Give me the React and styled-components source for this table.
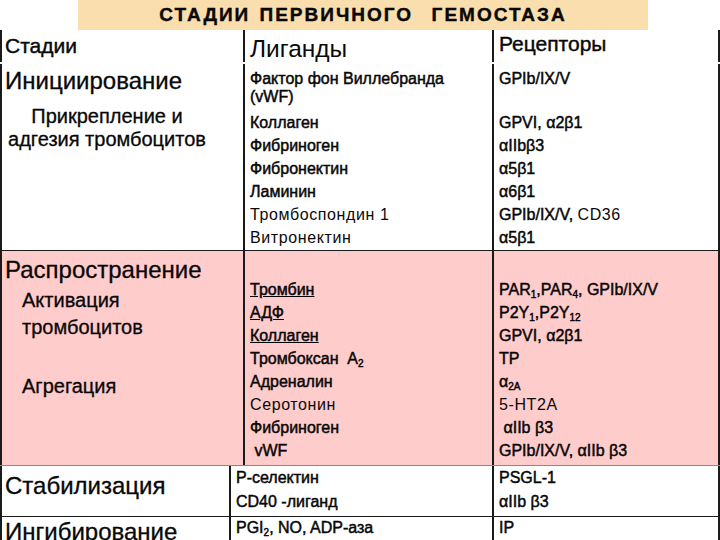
import React from "react";
import styled, { createGlobalStyle } from "styled-components";

const Global = createGlobalStyle`
  html, body { margin: 0; padding: 0; background: #fff; }
  body { font-family: "Liberation Sans", Arial, sans-serif; color: #0a0a0a; }
`;

const Page = styled.div`
  width: 720px;
  height: 540px;
  overflow: hidden;
  background: #fff;
  display: flex;
  flex-direction: column;
`;

const Banner = styled.div`
  margin-left: 78px;
  width: 570px;
  height: 30px;
  flex: none;
  background: #fbdeae;
  display: flex;
  align-items: center;
  justify-content: center;
  font-weight: 700;
  font-size: 19px;
  letter-spacing: 2px;
  word-spacing: 2px;
  -webkit-text-stroke: 0.4px #000;
  white-space: pre;
`;

const Row = styled.div`
  display: grid;
  grid-template-columns: ${(p) => p.$cols};
  height: ${(p) => p.$h}px;
  flex: none;
  margin-top: ${(p) => p.$gap || 0}px;
  background: ${(p) => (p.$pink ? "#ffcccc" : "#fff")};
  border-top: ${(p) => (p.$line ? `1px solid ${p.$line}` : "none")};
  box-sizing: border-box;
`;

const Cell = styled.div`
  border-left: 2px solid #1a1a1a;
  ${(p) => (p.$last ? "border-right: 2px solid #1a1a1a;" : "")}
  box-sizing: border-box;
  padding: ${(p) => p.$pad || "0 0 0 5px"};
  display: flex;
  flex-direction: column;
  overflow: hidden;
  min-width: 0;
`;

const Head = styled.div`
  font-size: ${(p) => p.$size}px;
  line-height: ${(p) => p.$lh || 24}px;
  margin-top: ${(p) => p.$mt || 0}px;
  ${(p) => (p.$heavy ? "-webkit-text-stroke: 0.4px #000;" : "")}
  white-space: nowrap;
`;

const Stage = styled.div`
  font-size: ${(p) => p.$size || 24}px;
  line-height: ${(p) => p.$lh || 26}px;
  margin-top: ${(p) => p.$mt || 0}px;
  padding-left: ${(p) => p.$indent || 0}px;
  white-space: nowrap;
  -webkit-text-stroke: 0.3px #000;
  ${(p) => (p.$center ? "text-align: center; width: 204px; padding-left: 0;" : "")}
`;

const Item = styled.div`
  font-size: 16px;
  line-height: ${(p) => p.$lh || 23}px;
  min-height: ${(p) => p.$min || 0}px;
  margin-bottom: ${(p) => p.$mb || 0}px;
  white-space: ${(p) => (p.$wrap ? "normal" : "nowrap")};
  ${(p) => (p.$wrap ? "max-width: 225px;" : "")}
  letter-spacing: ${(p) => (p.$light ? "0.6px" : "0")};
  text-decoration: ${(p) => (p.$u ? "underline" : "none")};
  -webkit-text-stroke: ${(p) => (p.$light ? "0" : "0.45px #000")};
  sub {
    font-size: 10px;
    vertical-align: -3px;
    line-height: 0;
  }
`;

const Plain = styled.span`
  letter-spacing: 0.6px;
  -webkit-text-stroke: 0;
`;

const UP = "243px 249px 1fr";
const LOW = "229px 263px 1fr";

export default function App() {
  return (
    <>
      <Global />
      <Page>
        <Banner>{"СТАДИИ ПЕРВИЧНОГО  ГЕМОСТАЗА"}</Banner>

        <Row $cols={UP} $h={32}>
          <Cell $pad="4px 0 0 3px">
            <Head $size={21} $heavy>Стадии</Head>
          </Cell>
          <Cell $pad="6px 0 0 5px">
            <Head $size={24.5} $lh={26}>Лиганды</Head>
          </Cell>
          <Cell $last $pad="2px 0 0 5px">
            <Head $size={21} $heavy>Рецепторы</Head>
          </Cell>
        </Row>

        <Row $cols={UP} $h={186} $gap={2}>
          <Cell $pad="4px 0 0 3px">
            <Stage>Инициирование</Stage>
            <Stage $size={20} $lh={23} $mt={11} $center>Прикрепление и</Stage>
            <Stage $size={20} $lh={23} $center>адгезия тромбоцитов</Stage>
          </Cell>
          <Cell $pad="6px 0 0 5px">
            <Item $lh={18} $min={36} $mb={5} $wrap>Фактор фон Виллебранда (vWF)</Item>
            <Item>Коллаген</Item>
            <Item>Фибриноген</Item>
            <Item>Фибронектин</Item>
            <Item>Ламинин</Item>
            <Item $light>Тромбоспондин 1</Item>
            <Item $light>Витронектин</Item>
          </Cell>
          <Cell $last $pad="6px 0 0 5px">
            <Item $lh={18} $min={36} $mb={5}>GPIb/IX/V</Item>
            <Item>GPVI, α2β1</Item>
            <Item>αIIbβ3</Item>
            <Item>α5β1</Item>
            <Item>α6β1</Item>
            <Item>GPIb/IX/V, <Plain>CD36</Plain></Item>
            <Item>α5β1</Item>
          </Cell>
        </Row>

        <Row $cols={UP} $h={215} $pink $line="#1a1a1a">
          <Cell $pad="6px 0 0 3px">
            <Stage>Распространение</Stage>
            <Stage $size={20} $lh={23} $mt={6} $indent={17}>Активация</Stage>
            <Stage $size={20} $lh={23} $mt={4} $indent={17}>тромбоцитов</Stage>
            <Stage $size={20} $lh={23} $mt={36} $indent={17}>Агрегация</Stage>
          </Cell>
          <Cell $pad="27px 0 0 5px">
            <Item $u>Тромбин</Item>
            <Item $u>АДФ</Item>
            <Item $u>Коллаген</Item>
            <Item>Тромбоксан&nbsp; A<sub>2</sub></Item>
            <Item>Адреналин</Item>
            <Item $light>Серотонин</Item>
            <Item>Фибриноген</Item>
            <Item>&nbsp;vWF</Item>
          </Cell>
          <Cell $last $pad="27px 0 0 5px">
            <Item>PAR<sub>1</sub>,PAR<sub>4</sub>, GPIb/IX/V</Item>
            <Item>P2Y<sub>1</sub>,P2Y<sub>12</sub></Item>
            <Item>GPVI, α2β1</Item>
            <Item>TP</Item>
            <Item>α<sub>2A</sub></Item>
            <Item $light>5-HT2A</Item>
            <Item>&nbsp;αIIb β3</Item>
            <Item>GPIb/IX/V, αIIb β3</Item>
          </Cell>
        </Row>

        <Row $cols={LOW} $h={51} $line="#888">
          <Cell $pad="7px 0 0 3px">
            <Stage>Стабилизация</Stage>
          </Cell>
          <Cell $pad="0 0 0 5px">
            <Item $lh={24}>P-селектин</Item>
            <Item $lh={24}>CD40 -лиганд</Item>
          </Cell>
          <Cell $last $pad="0 0 0 5px">
            <Item $lh={24}>PSGL-1</Item>
            <Item $lh={24}>αIIb β3</Item>
          </Cell>
        </Row>

        <Row $cols={LOW} $h={40} $line="#1a1a1a">
          <Cell $pad="2px 0 0 3px">
            <Stage>Ингибирование</Stage>
          </Cell>
          <Cell $pad="0 0 0 5px">
            <Item $lh={22}>PGI<sub>2</sub>, NO, ADP-аза</Item>
          </Cell>
          <Cell $last $pad="0 0 0 5px">
            <Item $lh={22}>IP</Item>
          </Cell>
        </Row>
      </Page>
    </>
  );
}
